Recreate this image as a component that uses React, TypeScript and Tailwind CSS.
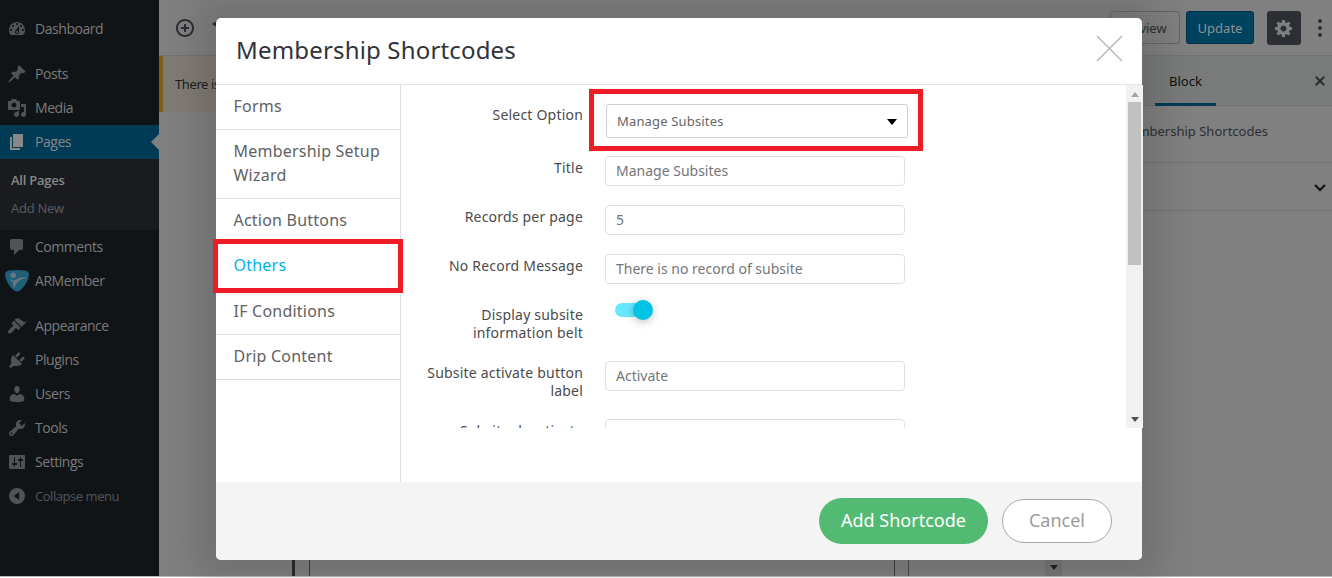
import React from "react";

const icons = {
  dashboard:
    "M3.76 16h12.48c1.1-1.37 1.76-3.11 1.76-5 0-4.42-3.58-8-8-8s-8 3.58-8 8c0 1.89.66 3.63 1.76 5zM10 4c.55 0 1 .45 1 1s-.45 1-1 1-1-.45-1-1 .45-1 1-1zM6 6c.55 0 1 .45 1 1s-.45 1-1 1-1-.45-1-1 .45-1 1-1zm8 0c.55 0 1 .45 1 1s-.45 1-1 1-1-.45-1-1 .45-1 1-1zm-5.37 5.55L12 7v6c0 1.1-.9 2-2 2s-2-.9-2-2c0-.57.24-1.08.63-1.45zM4 10c.55 0 1 .45 1 1s-.45 1-1 1-1-.45-1-1 .45-1 1-1zm12 0c.55 0 1 .45 1 1s-.45 1-1 1-1-.45-1-1 .45-1 1-1zm-5 3c0-.55-.45-1-1-1s-1 .45-1 1 .45 1 1 1 1-.45 1-1z",
  post: "M10.44 3.02l1.82-1.82 6.36 6.35-1.83 1.82c-1.05-.68-2.48-.57-3.41.36l-.75.75c-.92.93-1.04 2.35-.35 3.41l-1.83 1.82-2.41-2.41-2.8 2.79c-.42.42-3.38 2.71-3.8 2.29s1.86-3.39 2.28-3.81l2.79-2.79L4.1 9.36l1.83-1.82c1.05.69 2.48.57 3.4-.36l.75-.75c.93-.92 1.05-2.35.36-3.41z",
  media:
    "M13 11V4c0-.55-.45-1-1-1h-1.67L9 1H5L3.67 3H2c-.55 0-1 .45-1 1v7c0 .55.45 1 1 1h10c.55 0 1-.45 1-1zM7 4.5c1.38 0 2.5 1.12 2.5 2.5S8.38 9.5 7 9.5 4.5 8.38 4.5 7 5.62 4.5 7 4.5zM14 6h5v10.5c0 1.38-1.12 2.5-2.5 2.5S14 17.88 14 16.5s1.12-2.5 2.5-2.5c.17 0 .34.02.5.05V9h-3V6zm-4 8.05V13h2v3.5c0 1.38-1.12 2.5-2.5 2.5S7 17.88 7 16.5 8.12 14 9.5 14c.17 0 .34.02.5.05z",
  page: "M6 15V2h10v13H6zm-1 1h8v2H3V5h2v11z",
  comments:
    "M5 2h9c1.1 0 2 .9 2 2v7c0 1.1-.9 2-2 2h-2l-5 5v-5H5c-1.1 0-2-.9-2-2V4c0-1.1.9-2 2-2z",
  appearance:
    "M14.48 11.06L7.41 3.99l1.5-1.5c.5-.56 2.3-.47 3.51.32 1.21.8 1.43 1.28 2.91 2.1 1.18.64 2.45 1.26 4.45.85zm-.71.71L6.7 4.7 4.93 6.47c-.39.39-.39 1.02 0 1.41l1.06 1.06c.39.39.39 1.03 0 1.42-.6.6-1.43 1.11-2.21 1.69-.35.26-.7.53-1.01.84C1.43 14.23.4 16.08 1.4 17.07c.99 1 2.84-.03 4.18-1.36.31-.31.58-.66.85-1.02.57-.78 1.08-1.61 1.69-2.21.39-.39 1.02-.39 1.41 0l1.06 1.06c.39.39 1.02.39 1.41 0z",
  plugins:
    "M13.11 4.36L9.87 7.6 8 5.73l3.24-3.24c.35-.34 1.05-.2 1.56.32.52.51.66 1.21.31 1.55zm-8 1.77l.91-1.12 9.01 9.01-1.19.84c-.71.71-2.63 1.16-3.82 1.16H6.14L4.9 17.26c-.59.59-1.54.59-2.12 0-.59-.58-.59-1.53 0-2.12l1.24-1.24v-3.88c0-1.13.4-3.19 1.09-3.89zm7.26 3.97l3.24-3.24c.34-.35 1.04-.21 1.55.31.52.51.66 1.21.31 1.55l-3.24 3.25z",
  users:
    "M10 9.25c-2.27 0-2.73-3.44-2.73-3.44C7 4.02 7.82 2 9.97 2c2.16 0 2.98 2.02 2.71 3.81 0 0-.41 3.44-2.68 3.44zm0 2.57L12.72 10c2.39 0 4.52 2.33 4.52 4.53v2.49s-3.65 1.13-7.24 1.13c-3.65 0-7.24-1.13-7.24-1.13v-2.49c0-2.25 1.94-4.48 4.47-4.48z",
  tools:
    "M16.68 9.77c-1.34 1.34-3.3 1.67-4.95.99l-5.41 6.52c-.99.99-2.59.99-3.58 0s-.99-2.59 0-3.57l6.52-5.42c-.68-1.65-.35-3.61.99-4.95 1.28-1.28 3.12-1.62 4.72-1.06l-2.89 2.89 2.82 2.82 2.86-2.87c.53 1.58.18 3.39-1.08 4.65zM3.81 16.21c.4.39 1.04.39 1.43 0 .4-.4.4-1.04 0-1.43-.39-.4-1.03-.4-1.43 0-.39.39-.39 1.03 0 1.43z",
  settings:
    "M18 16V4c0-.55-.45-1-1-1H3c-.55 0-1 .45-1 1v12c0 .55.45 1 1 1h14c.55 0 1-.45 1-1zM8 11h1c.55 0 1 .45 1 1s-.45 1-1 1H8v1.5c0 .28-.22.5-.5.5s-.5-.22-.5-.5V13H6c-.55 0-1-.45-1-1s.45-1 1-1h1V5.5c0-.28.22-.5.5-.5s.5.22.5.5V11zm5-2h-1c-.55 0-1-.45-1-1s.45-1 1-1h1V5.5c0-.28.22-.5.5-.5s.5.22.5.5V7h1c.55 0 1 .45 1 1s-.45 1-1 1h-1v5.5c0 .28-.22.5-.5.5s-.5-.22-.5-.5V9z",
  collapse: "M10 2a8 8 0 1 0 0 16a8 8 0 1 0 0-16zM12.2 6v8L6.8 10z",
  gear: "M18 12h-2.18c-.17.7-.44 1.35-.81 1.93l1.54 1.54-2.1 2.1-1.54-1.54c-.58.36-1.23.63-1.91.79V19H8v-2.18c-.68-.16-1.33-.43-1.91-.79l-1.54 1.54-2.12-2.12 1.54-1.54c-.36-.58-.63-1.23-.79-1.91H1V9.03h2.17c.16-.7.44-1.35.8-1.94L2.43 5.55l2.1-2.1 1.54 1.54c.58-.37 1.24-.64 1.93-.81V2h3v2.18c.68.16 1.33.43 1.91.79l1.54-1.54 2.12 2.12-1.54 1.54c.36.59.64 1.24.8 1.94H18V12zm-8.5 1.5c1.66 0 3-1.34 3-3s-1.34-3-3-3-3 1.34-3 3 1.34 3 3 3z",
  insert:
    "M10 1c-5 0-9 4-9 9s4 9 9 9 9-4 9-9-4-9-9-9zm0 16c-3.9 0-7-3.1-7-7s3.1-7 7-7 7 3.1 7 7-3.1 7-7 7zm1-11H9v3H6v2h3v3h2v-3h3V9h-3V6z",
  undo: "M12 5H7V2L1 6l6 4V7h5c2.2 0 4 1.8 4 4s-1.8 4-4 4H7v2h5c3.3 0 6-2.7 6-6s-2.7-6-6-6z",
  close:
    "M14.95 6.46L11.41 10l3.54 3.54-1.41 1.41L10 11.42l-3.53 3.53-1.42-1.42L8.58 10 5.05 6.47l1.42-1.42L10 8.58l3.54-3.53z",
};

type IconName = keyof typeof icons;

function Icon({ name, className = "" }: { name: IconName; className?: string }) {
  return (
    <svg viewBox="0 0 20 20" className={`size-5 shrink-0 fill-current ${className}`}>
      <path fillRule="evenodd" d={icons[name]} />
    </svg>
  );
}

function MemberLogo() {
  return (
    <svg viewBox="0 0 24 22" className="-ml-[2px] h-[22px] w-6 shrink-0">
      <path
        d="M4 .5Q12-.5 20 .5Q24 1.300 24 4.500C23.500 11 19 17 14.800 20.600Q12 22.600 9.200 20.600C5 17 .5 11 0 4.500Q0 1.300 4 .5z"
        fill="#205f78"
      />
      <circle cx="8.300" cy="5.300" r="2.700" fill="#687880" />
      <path
        d="M4.500 8.800Q8 12 12.500 8.800Q17 5.800 22.800 8.200Q16.500 8.300 13 11.500Q10 14.500 9.300 18.300Q7.200 15 8.300 12.200Q5.800 11.500 4.500 8.800z"
        fill="#687880"
      />
    </svg>
  );
}

function MenuItem({ icon, label, dim }: { icon?: IconName; label: string; dim?: boolean }) {
  return (
    <div
      className={`flex h-[34px] items-center pl-[7px] ${dim ? "text-[13px] text-[#515457]" : "text-[14px] text-[#7b7b7b]"}`}
    >
      {icon ? <Icon name={icon} className="text-[#505356]" /> : <MemberLogo />}
      <span className={`${dim ? "pt-[2px]" : "pb-px"} ${icon ? "ml-2" : "ml-[6px]"}`}>{label}</span>
    </div>
  );
}

function Sidebar() {
  return (
    <nav className="flex w-[159px] shrink-0 flex-col bg-[#111417] pt-3 font-['Open_Sans',sans-serif] tracking-[-0.45px]">
      <MenuItem icon="dashboard" label="Dashboard" />
      <div className="h-[11px]" />
      <MenuItem icon="post" label="Posts" />
      <MenuItem icon="media" label="Media" />
      <div className="flex h-[34px] items-center bg-[#003a55] pl-[7px] text-[14px] text-[#888]">
        <Icon name="page" />
        <span className="ml-2 pb-px">Pages</span>
        <div className="ml-auto h-0 w-0 border-y-8 border-r-8 border-y-transparent border-r-[#808080]" />
      </div>
      <div className="h-[71px] bg-[#1a1b1f] pt-[7px] pl-[11px] text-[13px] leading-7 tracking-[-0.25px]">
        <div className="font-semibold text-[#888]">All Pages</div>
        <div className="text-[#5a5d60]">Add New</div>
      </div>
      <MenuItem icon="comments" label="Comments" />
      <MenuItem label="ARMember" />
      <div className="h-[11px]" />
      <MenuItem icon="appearance" label="Appearance" />
      <MenuItem icon="plugins" label="Plugins" />
      <MenuItem icon="users" label="Users" />
      <MenuItem icon="tools" label="Tools" />
      <MenuItem icon="settings" label="Settings" />
      <MenuItem icon="collapse" label="Collapse menu" dim />
    </nav>
  );
}

function EditorHeader() {
  return (
    <header className="flex h-14 items-center border-b border-[#717273] pl-4 text-[#2b2e33]">
      <Icon name="insert" />
      <Icon name="undo" className="ml-4" />
      <div className="mr-[2px] ml-auto flex items-start text-[13px]">
        <div className="mr-[6px] flex h-[33px] w-[70px] items-center justify-center rounded-[3px] border border-[#666] pt-[3px] pr-1">
          Preview
        </div>
        <div className="mr-[13px] flex h-[33px] w-[68px] items-center justify-center rounded-[3px] border border-[#003048] bg-[#00435f] pt-[3px] text-[#909090]">
          Update
        </div>
        <div className="mr-[9px] flex size-[34px] items-center justify-center rounded-[3px] bg-[#2b2e33] text-[#808080]">
          <Icon name="gear" />
        </div>
        <svg viewBox="0 0 20 34" className="h-[34px] w-5 fill-current">
          <circle cx="10" cy="10" r="2" />
          <circle cx="10" cy="17" r="2" />
          <circle cx="10" cy="24" r="2" />
        </svg>
      </div>
    </header>
  );
}

function EditorPanel() {
  return (
    <aside className="w-[270px] shrink-0 text-[13px]">
      <div className="flex h-[50px] items-center border-b border-[#717273] bg-[#797b7b] text-[#0d0f11]">
        <div className="ml-[93px] flex h-[50px] w-[61px] items-center justify-center border-b-[3px] border-[#003a55] pt-[5px]">
          Block
        </div>
        <Icon name="close" className="mr-[2px] ml-auto text-[#2b2e33]" />
      </div>
      <div className="flex h-[57px] items-center justify-end border-b border-[#717273] pr-[64px] pb-1 text-[#2c3034]">
        Membership Shortcodes
      </div>
      <div className="flex h-12 items-center justify-end border-b border-[#717273] pt-[2px] pr-[6px]">
        <svg viewBox="0 0 12 8" className="h-2 w-3 fill-none stroke-[#0d0f11] stroke-2">
          <path d="M1 1l5 5 5-5" />
        </svg>
      </div>
    </aside>
  );
}

function Editor() {
  return (
    <main className="flex min-w-0 flex-1 flex-col bg-[#808080]">
      <EditorHeader />
      <div className="flex min-h-0 flex-1">
        <div className="flex flex-1 flex-col">
          <div className="flex h-14 items-center border-l-4 border-[#805c17] bg-[#807b74] pt-[2px] pl-3 text-[13px] tracking-[-0.4px] text-[#1c1e20]">
            There is an autosave of this post that is more recent.
          </div>
          <div className="flex flex-1 justify-end">
            <div className="flex w-[753px] border-l-[3px] border-[#272c30] pl-[14px]">
              <div className="w-[586px] border-x border-[#3e4144]" />
              <div className="ml-[13px] flex-1 border-l border-[#4b4e50]" />
            </div>
            <div className="flex w-[17px] flex-col items-center justify-end bg-[#777] pb-[6px]">
              <div className="h-0 w-0 border-x-4 border-t-[5px] border-x-transparent border-t-[#222]" />
            </div>
          </div>
        </div>
        <EditorPanel />
      </div>
    </main>
  );
}

const tabs = [
  { label: "Forms", size: "h-[45px]" },
  { label: "Membership Setup Wizard", size: "h-[69px]" },
  { label: "Action Buttons", size: "h-[45px]" },
  { label: "Others", size: "h-[46px]", active: true },
  { label: "IF Conditions", size: "h-[45px]" },
  { label: "Drip Content", size: "h-[45px]" },
];

function FormRow({ label, size, children }: { label: string; size: string; children: React.ReactNode }) {
  return (
    <div className={`flex shrink-0 ${size}`}>
      <label className="mr-[22px] ml-[22px] w-[160px] pt-[3px] text-right text-[14px] leading-[18px] tracking-[0.2px] text-[#4a4a4c]">
        {label}
      </label>
      {children}
    </div>
  );
}

function TextField({ value }: { value?: string }) {
  return (
    <div className="flex h-[30px] w-[300px] items-center rounded-[4px] border border-[#dbe1e8] pb-[2px] pl-[10px] text-[14px] text-[#767678]">
      {value}
    </div>
  );
}

function ShortcodeForm() {
  return (
    <div className="-mr-px flex h-[343px] overflow-hidden">
      <div className="flex flex-1 flex-col pt-[19px]">
        <div className="flex h-[52px] shrink-0">
          <label className="mr-[23px] ml-[22px] w-[160px] pt-[2px] text-right text-[14px] leading-[18px] tracking-[0.2px] text-[#4a4a4c]">
            Select Option
          </label>
          <div className="flex h-[34px] w-[302px] items-center justify-between rounded-[3px] border border-[#ccced0] pt-[2px] pr-[10px] pl-[10px] text-[13px] tracking-[0.16px] text-[#666]">
            Manage Subsites
            <div className="h-0 w-0 border-x-[5.5px] border-t-[6px] border-x-transparent border-t-black" />
          </div>
        </div>
        <FormRow label="Title" size="h-[49px]">
          <TextField value="Manage Subsites" />
        </FormRow>
        <FormRow label="Records per page" size="h-[49px]">
          <TextField value="5" />
        </FormRow>
        <FormRow label="No Record Message" size="h-[49px]">
          <TextField value="There is no record of subsite" />
        </FormRow>
        <FormRow label="Display subsite information belt" size="h-[58px]">
          <div className="ml-[10px] flex h-[14px] w-[36px] items-center rounded-full bg-[#66e7fd] pl-[18px]">
            <div className="size-5 shrink-0 rounded-full bg-[#00c3e6] shadow-[0_2px_8px_rgba(0,0,0,0.25)]" />
          </div>
        </FormRow>
        <FormRow label="Subsite activate button label" size="h-[58px]">
          <TextField value="Activate" />
        </FormRow>
        <FormRow label="Subsite deactivate button label" size="h-[58px]">
          <TextField />
        </FormRow>
      </div>
      <div className="flex w-[17px] flex-col items-center justify-between bg-[#f1f1f1]">
        <div className="flex flex-col items-center">
          <div className="mt-[7px] mb-[5px] h-0 w-0 border-x-4 border-b-[5px] border-x-transparent border-b-[#a3a3a3]" />
          <div className="h-[163px] w-[13px] bg-[#c1c1c1]" />
        </div>
        <div className="mb-[6px] h-0 w-0 border-x-4 border-t-[5px] border-x-transparent border-t-[#505050]" />
      </div>
    </div>
  );
}

function Modal() {
  return (
    <div className="absolute top-[18px] left-[216px] flex h-[542px] w-[926px] flex-col rounded-[5px] bg-white shadow-[0_0_36px_20px_rgba(0,0,0,0.13)]">
      <div className="flex h-[67px] shrink-0 items-center justify-between border-b border-[#e3e5e8] pr-[19px] pl-5">
        <h1 className="pb-[2px] text-[24px] tracking-[0.17px] text-[#32323a]">Membership Shortcodes</h1>
        <svg viewBox="0 0 27 27" className="-mt-[6px] size-[27px] stroke-[#b8b8b8] stroke-[1.5]">
          <path d="M1 1l25 25M26 1L1 26" />
        </svg>
      </div>
      <div className="flex h-[397px]">
        <div className="w-[185px] shrink-0 border-r border-[#dbe1e8]">
          {tabs.map((t) => (
            <div
              key={t.label}
              className={`border-b border-[#dbe1e8] pt-[9px] pr-4 pl-[17.5px] text-[16px] leading-6 tracking-[0.22px] ${t.size} ${
                t.active ? "text-[#00b2ec]" : "text-[#616164]"
              }`}
            >
              {t.label}
            </div>
          ))}
        </div>
        <div className="min-w-0 flex-1">
          <ShortcodeForm />
        </div>
      </div>
      <div className="flex h-[78px] items-center justify-end gap-[14px] rounded-b-[5px] bg-[#f4f4f4] pr-[30px] text-[18px]">
        <button className="h-[46px] w-[169px] rounded-full bg-[#53ba73] pb-[2px] text-white">Add Shortcode</button>
        <button className="h-11 w-[110px] rounded-full border border-[#a9a9a9] bg-white pb-[2px] text-[#9b9b9b]">
          Cancel
        </button>
      </div>
      <div className="absolute top-[221px] -left-[3px] h-[54px] w-[190px] border-[5px] border-[#ee1c25]" />
      <div className="absolute top-[71px] left-[373px] h-[62px] w-[334px] border-[5px] border-[#ee1c25]" />
    </div>
  );
}

export default function App() {
  return (
    <div className="relative h-[578px] w-[1332px] overflow-hidden bg-white font-['Noto_Sans',sans-serif]">
      <div className="flex h-[577px] border-b border-[#b8b8b8]">
        <Sidebar />
        <Editor />
      </div>
      <Modal />
    </div>
  );
}
